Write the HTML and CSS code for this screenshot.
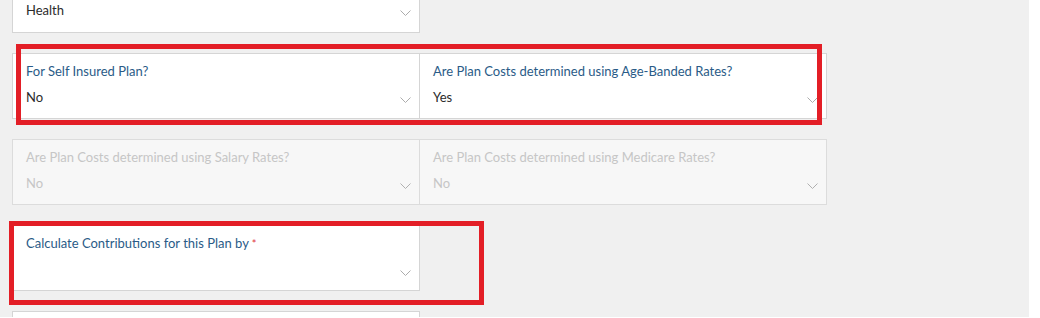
FILE: index.html
```html
<!DOCTYPE html>
<html lang="en">
<head>
    <meta charset="UTF-8">
    <title>Plan Details</title>
    <link rel="stylesheet" href="styles.css">
</head>
<body>
    <div class="page">
        <div class="form">
            <div class="row single">
                <div class="field">
                    <div class="label">&nbsp;</div>
                    <div class="value-row">
                        <span class="value">Health</span>
                        <svg class="chevron" width="11" height="6" viewBox="0 0 11 6"><polyline points="0.5,0.5 5.5,5.5 10.5,0.5" /></svg>
                    </div>
                </div>
            </div>

            <div class="row double">
                <div class="field">
                    <div class="label">For Self Insured Plan?</div>
                    <div class="value-row">
                        <span class="value">No</span>
                        <svg class="chevron" width="11" height="6" viewBox="0 0 11 6"><polyline points="0.5,0.5 5.5,5.5 10.5,0.5" /></svg>
                    </div>
                </div>
                <div class="field">
                    <div class="label">Are Plan Costs determined using Age-Banded Rates?</div>
                    <div class="value-row">
                        <span class="value">Yes</span>
                        <svg class="chevron" width="11" height="6" viewBox="0 0 11 6"><polyline points="0.5,0.5 5.5,5.5 10.5,0.5" /></svg>
                    </div>
                </div>
            </div>

            <div class="row double disabled">
                <div class="field">
                    <div class="label">Are Plan Costs determined using Salary Rates?</div>
                    <div class="value-row">
                        <span class="value">No</span>
                        <svg class="chevron" width="11" height="6" viewBox="0 0 11 6"><polyline points="0.5,0.5 5.5,5.5 10.5,0.5" /></svg>
                    </div>
                </div>
                <div class="field">
                    <div class="label">Are Plan Costs determined using Medicare Rates?</div>
                    <div class="value-row">
                        <span class="value">No</span>
                        <svg class="chevron" width="11" height="6" viewBox="0 0 11 6"><polyline points="0.5,0.5 5.5,5.5 10.5,0.5" /></svg>
                    </div>
                </div>
            </div>

            <div class="row single">
                <div class="field">
                    <div class="label">Calculate Contributions for this Plan by <span class="required">*</span></div>
                    <div class="value-row">
                        <span class="value"></span>
                        <svg class="chevron" width="11" height="6" viewBox="0 0 11 6"><polyline points="0.5,0.5 5.5,5.5 10.5,0.5" /></svg>
                    </div>
                </div>
            </div>

            <div class="row single">
                <div class="field">
                    <div class="label">&nbsp;</div>
                    <div class="value-row"><span class="value"></span></div>
                </div>
            </div>
        </div>

        <!-- review markers drawn over the form -->
        <div class="marker marker-top"></div>
        <div class="marker marker-bottom"></div>
    </div>
</body>
</html>
```

FILE: styles.css
```css
body {
    margin: 0;
    background: #ffffff;
    font-family: Lato, "Open Sans", sans-serif;
}

.page {
    position: relative;
    width: 1029px;
    height: 317px;
    background: #f0f0f0;
    overflow: hidden;
}

.form {
    display: flex;
    flex-direction: column;
    gap: 20px;
    margin-top: -34px;
    padding-left: 12px;
}

.row {
    display: flex;
    height: 66px;
    box-sizing: border-box;
    border: 1px solid #d5d5d5;
    background: #ffffff;
}

.row.single {
    width: 408px;
}

.row.double {
    width: 815px;
}

.form .row:first-child {
    height: 67px;
}

.field {
    flex: 1;
    padding: 8px 8px 0 13px;
    box-sizing: border-box;
}

.double .field + .field {
    border-left: 1px solid #d5d5d5;
}

.label {
    font-size: 13px;
    line-height: 18px;
    color: #2a5b87;
    white-space: nowrap;
}

.required {
    color: #e0353d;
    font-size: 11px;
}

.value-row {
    display: flex;
    justify-content: space-between;
    align-items: center;
    height: 18px;
    margin-top: 8px;
}

.value {
    font-size: 13px;
    line-height: 18px;
    color: #2b2b2b;
}

.chevron {
    margin-top: 5px;
    fill: none;
    stroke: #acacac;
    stroke-width: 1;
}

/* disabled row */
.disabled {
    background: #f7f7f7;
    border-color: #dcdcdc;
}

.disabled .field + .field {
    border-left-color: #dcdcdc;
}

.disabled .label,
.disabled .value {
    color: #c6c6c6;
}

.disabled .chevron {
    stroke: #b0b0b0;
}

/* red highlight boxes */
.marker {
    position: absolute;
    box-sizing: border-box;
    border: 5px solid #e31e26;
}

.marker-top {
    left: 16px;
    top: 44px;
    width: 806px;
    height: 81px;
}

.marker-bottom {
    left: 9px;
    top: 221px;
    width: 475px;
    height: 84px;
}
```
